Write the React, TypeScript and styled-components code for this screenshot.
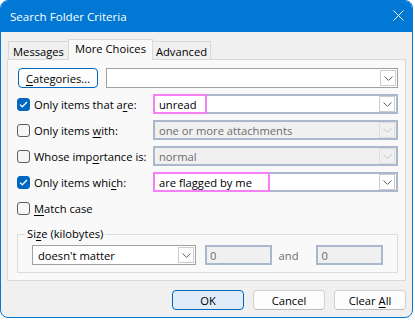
import React from "react";
import styled, { createGlobalStyle } from "styled-components";

const GlobalStyle = createGlobalStyle`
  html, body {
    margin: 0;
    padding: 0;
    background: #ffffff;
  }
  body {
    font-family: "Open Sans", "Noto Sans", sans-serif;
    font-size: 11.2px;
    color: #000000;
  }
`;

type CheckProps = { checked?: boolean };

const CheckBox: React.FC<CheckProps> = ({ checked }) => (
  <Box $checked={checked}>
    {checked && (
      <svg width="9" height="7" viewBox="0 0 9 7">
        <path d="M1 3.6 L3.3 5.8 L8 1" fill="none" stroke="#fff" strokeWidth="1.3" />
      </svg>
    )}
  </Box>
);

const Arrow: React.FC<{ disabled?: boolean }> = ({ disabled }) => (
  <DropButton $disabled={disabled}>
    <svg width="9" height="5" viewBox="0 0 9 5">
      <path d="M0.5 0.5 L4.5 4.3 L8.5 0.5" fill="none" stroke={disabled ? "#c4c4c4" : "#606060"} strokeWidth="1" />
    </svg>
  </DropButton>
);

type Criteria = {
  label: React.ReactNode;
  value: string;
  checked?: boolean;
  mark?: number;
};

function getRows(): Criteria[] {
  return [
    { label: <>Only items that a<U>r</U>e:</>, value: "unread", checked: true, mark: 54 },
    { label: <>Only items <U>w</U>ith:</>, value: "one or more attachments" },
    { label: <>Whose imp<U>o</U>rtance is:</>, value: "normal" },
    { label: <>Only items whi<U>c</U>h:</>, value: "are flagged by me", checked: true, mark: 117 },
  ];
}

export default function App() {
  const rows = getRows();
  return (
    <>
      <GlobalStyle />
      <Window>
        <TitleBar>
          <span>Search Folder Criteria</span>
          <svg width="11" height="11" viewBox="0 0 11 11">
            <path d="M0.5 0.5 L10.5 10.5 M10.5 0.5 L0.5 10.5" stroke="#fff" strokeWidth="1" />
          </svg>
        </TitleBar>
        <Body>
          <Tabs>
            <Tab $width={61}>Messages</Tab>
            <Tab $active $width={85}>More Choices</Tab>
            <Tab $width={59}>Advanced</Tab>
          </Tabs>
          <Panel>
            <Row>
              <CategoriesButton>
                <U>C</U>ategories...
              </CategoriesButton>
              <Combo $plain>
                <Arrow />
              </Combo>
            </Row>
            {rows.map((r, i) => {
              const enabled = !!r.checked;
              return (
                <Row key={i}>
                  <LabelCell>
                    <CheckBox checked={r.checked} />
                    <span>{r.label}</span>
                  </LabelCell>
                  <Combo $disabled={!enabled}>
                    <ComboText $disabled={!enabled}>{r.value}</ComboText>
                    <Arrow disabled={!enabled} />
                    {r.mark && <Highlight style={{ width: r.mark }} />}
                  </Combo>
                </Row>
              );
            })}
            <Row>
              <LabelCell>
                <CheckBox />
                <span>
                  <U>M</U>atch case
                </span>
              </LabelCell>
            </Row>
            <Group>
              <legend>
                Si<U>z</U>e (kilobytes)
              </legend>
              <GroupRow>
                <Combo $plain $width={164}>
                  <ComboText>doesn't matter</ComboText>
                  <Arrow />
                </Combo>
                <NumberBox>0</NumberBox>
                <AndText>and</AndText>
                <NumberBox>0</NumberBox>
              </GroupRow>
            </Group>
          </Panel>
          <Buttons>
            <Button $primary>OK</Button>
            <Button>Cancel</Button>
            <Button>
              {"Clear "}
              <U>A</U>ll
            </Button>
          </Buttons>
        </Body>
      </Window>
    </>
  );
}

const U = styled.span`
  text-decoration: underline;
  text-underline-offset: 2px;
`;

const Window = styled.div`
  width: 413px;
  height: 318px;
  box-sizing: border-box;
  border: 1px solid #0078d4;
  border-radius: 8px;
  overflow: hidden;
  background: #f0f0f0;
  display: flex;
  flex-direction: column;
`;

const TitleBar = styled.div`
  height: 30px;
  flex-shrink: 0;
  background: #0078d4;
  color: #ffffff;
  font-size: 11.6px;
  display: flex;
  align-items: center;
  justify-content: space-between;
  padding: 0 8px 1px 9px;
  svg {
    margin-top: -2px;
  }
`;

const Body = styled.div`
  flex: 1;
  display: flex;
  flex-direction: column;
  padding: 7px 6px 7px 6px;
`;

const Tabs = styled.div`
  display: flex;
  align-items: flex-end;
  padding-left: 2px;
  height: 20px;
`;

const Tab = styled.div<{ $active?: boolean; $width: number }>`
  box-sizing: border-box;
  width: ${(p) => p.$width}px;
  height: ${(p) => (p.$active ? "21px" : "18px")};
  margin-bottom: ${(p) => (p.$active ? "-1px" : "0")};
  margin-left: -1px;
  padding-top: ${(p) => (p.$active ? "1px" : "2px")};
  border: 1px solid #d9d9d9;
  border-bottom: none;
  background: ${(p) => (p.$active ? "#f9f9f9" : "#f0f0f0")};
  position: relative;
  z-index: ${(p) => (p.$active ? 1 : 0)};
  line-height: 15px;
  text-align: center;
  white-space: nowrap;
`;

const Panel = styled.div`
  height: 222px;
  box-sizing: border-box;
  border: 1px solid #d9d9d9;
  background: #f9f9f9;
  padding: 8px 7px 0 9px;
  display: flex;
  flex-direction: column;
  gap: 6px;
`;

const Row = styled.div`
  display: flex;
  align-items: center;
  height: 20px;
`;

const CategoriesButton = styled.div`
  box-sizing: border-box;
  width: 80px;
  height: 20px;
  margin: 0 8px 0 1px;
  border: 1px solid #0067c0;
  border-radius: 4px;
  background: #fdfdfd;
  display: flex;
  align-items: center;
  justify-content: center;
`;

const LabelCell = styled.div`
  width: 136px;
  flex-shrink: 0;
  display: flex;
  align-items: center;
  gap: 4px;
  white-space: nowrap;
`;

const Box = styled.div<{ $checked?: boolean }>`
  box-sizing: border-box;
  width: 13px;
  height: 13px;
  flex-shrink: 0;
  border-radius: 3px;
  border: 1px solid ${(p) => (p.$checked ? "#0067c0" : "#5d5d5d")};
  background: ${(p) => (p.$checked ? "#0067c0" : "#f6f6f6")};
  display: flex;
  align-items: center;
  justify-content: center;
`;

const Combo = styled.div<{ $disabled?: boolean; $plain?: boolean; $width?: number }>`
  position: relative;
  box-sizing: border-box;
  height: 20px;
  flex: ${(p) => (p.$width ? "none" : "1")};
  width: ${(p) => (p.$width ? `${p.$width}px` : "auto")};
  border: ${(p) => (p.$plain ? "1px solid #a0a0a0" : "2px solid #abb8cb")};
  background: ${(p) => (p.$disabled ? "#f0f0f0" : "#ffffff")};
  display: flex;
  align-items: center;
  justify-content: space-between;
  padding: 0 1px 0 ${(p) => (p.$plain ? "5px" : "4px")};
`;

const ComboText = styled.span<{ $disabled?: boolean }>`
  color: ${(p) => (p.$disabled ? "#6d6d6d" : "#000000")};
  white-space: nowrap;
`;

const DropButton = styled.div<{ $disabled?: boolean }>`
  box-sizing: border-box;
  width: 16px;
  height: 16px;
  margin-left: auto;
  border: 1px solid ${(p) => (p.$disabled ? "#dedede" : "#cccccc")};
  background: ${(p) => (p.$disabled ? "#f0f0f0" : "#ffffff")};
  display: flex;
  align-items: center;
  justify-content: center;
`;

const Highlight = styled.div`
  position: absolute;
  left: -2px;
  top: -2px;
  bottom: -2px;
  box-sizing: border-box;
  border: 2px solid #f77ff5;
  pointer-events: none;
`;

const Group = styled.fieldset`
  margin: 2px 0 0 0;
  min-width: 0;
  padding: 3px 14px 7px;
  border: 1px solid #dcdcdc;
  legend {
    margin-left: -7px;
    padding: 0 2px;
    line-height: 16px;
  }
`;

const GroupRow = styled.div`
  display: flex;
  align-items: center;
  height: 20px;
`;

const NumberBox = styled.div`
  box-sizing: border-box;
  width: 71px;
  height: 20px;
  margin-left: 9px;
  border: 2px solid #abb8cb;
  background: #f0f0f0;
  color: #6d6d6d;
  padding-left: 3px;
  display: flex;
  align-items: center;
`;

const AndText = styled.span`
  color: #6d6d6d;
  padding-left: 7px;
  width: 31px;
`;

const Buttons = styled.div`
  margin-top: auto;
  display: flex;
  justify-content: flex-end;
  gap: 9px;
`;

const Button = styled.div<{ $primary?: boolean }>`
  box-sizing: border-box;
  width: 72px;
  height: 20px;
  border-radius: 4px;
  border: 1px solid ${(p) => (p.$primary ? "#0067c0" : "#d0d0d0")};
  border-bottom-color: ${(p) => (p.$primary ? "#0067c0" : "#bcbcbc")};
  background: ${(p) => (p.$primary ? "#e0ecf8" : "#fdfdfd")};
  display: flex;
  align-items: center;
  justify-content: center;
  white-space: pre;
`;
